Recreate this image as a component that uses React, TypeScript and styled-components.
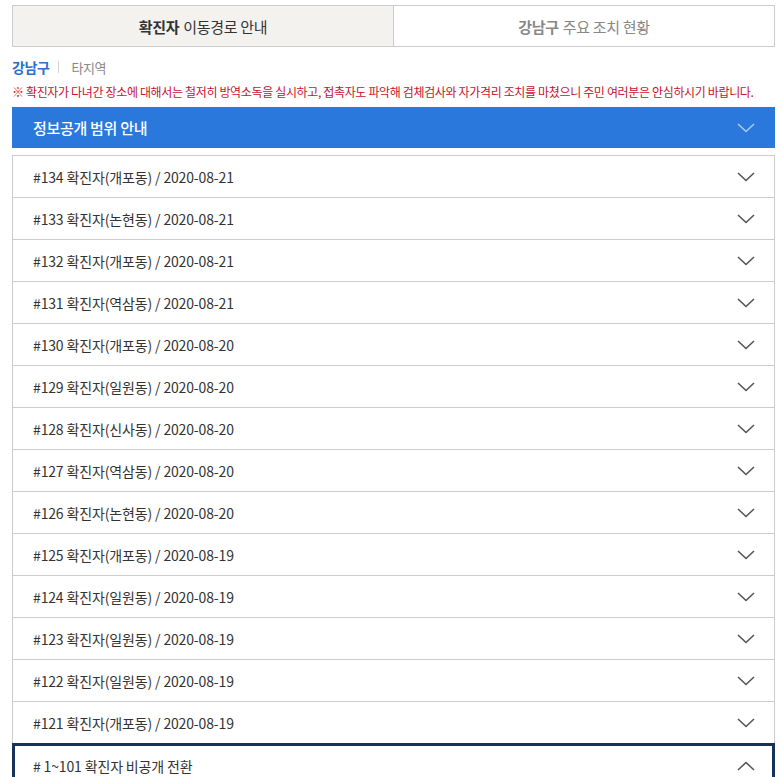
import React from "react";
import styled, { createGlobalStyle } from "styled-components";

const GlobalStyle = createGlobalStyle`
  html, body {
    margin: 0;
    padding: 0;
    background: #fff;
  }
  body {
    font-family: "Noto Sans CJK KR", "Noto Sans", sans-serif;
    color: #333;
  }
`;

const Page = styled.div`
  width: 763px;
  padding: 5px 0 0 12px;
`;

const Tabs = styled.div`
  display: flex;
  height: 40px;
  border: 1px solid #ccc;
`;

const Tab = styled.div<{ $active?: boolean; $divider?: boolean }>`
  flex: 1;
  display: flex;
  align-items: center;
  justify-content: center;
  font-size: 15px;
  letter-spacing: -0.3px;
  background: ${(p) => (p.$active ? "#f4f2ee" : "#fff")};
  color: ${(p) => (p.$active ? "#333" : "#888")};
  border-left: ${(p) => (p.$divider ? "1px solid #ccc" : "none")};
  b {
    font-weight: 700;
    margin-right: 4px;
  }
`;

const SubTabs = styled.div`
  display: flex;
  align-items: center;
  height: 20px;
  margin-top: 10px;
`;

const SubTab = styled.span<{ $active?: boolean }>`
  font-size: ${(p) => (p.$active ? "14px" : "13px")};
  font-weight: ${(p) => (p.$active ? 700 : 400)};
  color: ${(p) => (p.$active ? "#2a6fcf" : "#888")};
  letter-spacing: -0.4px;
`;

const SubDivider = styled.span`
  width: 1px;
  height: 12px;
  background: #d3d3d3;
  margin: 0 12px 0 9px;
`;

const Notice = styled.p`
  margin: 6px 0 0;
  font-size: 12px;
  line-height: 18px;
  color: #c8102e;
  letter-spacing: -0.35px;
  white-space: nowrap;
`;

const InfoBar = styled.div`
  margin-top: 6px;
  height: 41px;
  background: #2b78dc;
  color: #fff;
  display: flex;
  align-items: center;
  justify-content: space-between;
  padding: 0 20px 0 21px;
  font-size: 15px;
  font-weight: 500;
  letter-spacing: -0.3px;
`;

const List = styled.ul`
  list-style: none;
  margin: 7px 0 0;
  padding: 0;
  border-left: 1px solid #ccc;
  border-right: 1px solid #ccc;
`;

const Item = styled.li<{ $open?: boolean }>`
  height: 41px;
  border-top: 1px solid #ccc;
  display: flex;
  align-items: center;
  justify-content: space-between;
  padding: 0 19px 0 20px;
  font-size: 14px;
  color: #333;
  letter-spacing: -0.15px;
  ${(p) =>
    p.$open &&
    `
    border: 3px solid #17325a;
    border-bottom: none;
    margin: 0 -1px;
    padding: 0 17px 0 18px;
    height: 40px;
  `}
`;

const Chevron = ({ up, color = "#555" }: { up?: boolean; color?: string }) => (
  <svg width="18" height="10" viewBox="0 0 18 10" style={{ display: "block" }}>
    <path
      d={up ? "M1 9 L9 1.5 L17 9" : "M1 1 L9 8.5 L17 1"}
      fill="none"
      stroke={color}
      strokeWidth="1.6"
    />
  </svg>
);

const cases = [
  ["134", "개포동", "2020-08-21"],
  ["133", "논현동", "2020-08-21"],
  ["132", "개포동", "2020-08-21"],
  ["131", "역삼동", "2020-08-21"],
  ["130", "개포동", "2020-08-20"],
  ["129", "일원동", "2020-08-20"],
  ["128", "신사동", "2020-08-20"],
  ["127", "역삼동", "2020-08-20"],
  ["126", "논현동", "2020-08-20"],
  ["125", "개포동", "2020-08-19"],
  ["124", "일원동", "2020-08-19"],
  ["123", "일원동", "2020-08-19"],
  ["122", "일원동", "2020-08-19"],
  ["121", "개포동", "2020-08-19"],
];

export default function App() {
  return (
    <>
      <GlobalStyle />
      <Page>
        <Tabs>
          <Tab $active>
            <b>확진자</b>이동경로 안내
          </Tab>
          <Tab $divider>
            <b>강남구</b>주요 조치 현황
          </Tab>
        </Tabs>
        <SubTabs>
          <SubTab $active>강남구</SubTab>
          <SubDivider />
          <SubTab>타지역</SubTab>
        </SubTabs>
        <Notice>
          ※ 확진자가 다녀간 장소에 대해서는 철저히 방역소독을 실시하고, 접촉자도 파악해 검체검사와 자가격리 조치를 마쳤으니 주민 여러분은 안심하시기 바랍니다.
        </Notice>
        <InfoBar>
          정보공개 범위 안내
          <Chevron color="#a9c9f2" />
        </InfoBar>
        <List>
          {cases.map(([no, dong, date]) => (
            <Item key={no}>
              #{no} 확진자({dong}) / {date}
              <Chevron />
            </Item>
          ))}
          <Item $open>
            # 1~101 확진자 비공개 전환
            <Chevron up />
          </Item>
        </List>
      </Page>
    </>
  );
}
